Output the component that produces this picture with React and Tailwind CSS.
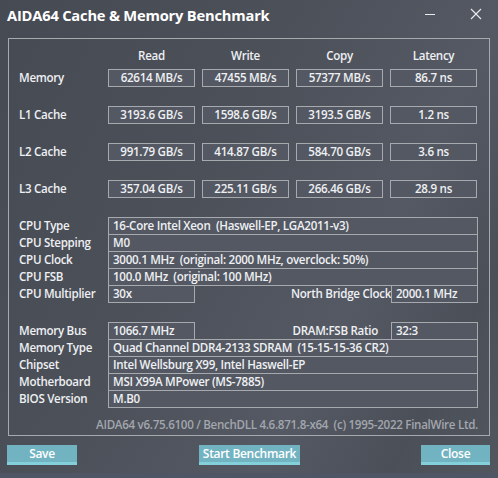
const speed = [
  { name: 'Memory', read: '62614 MB/s', write: '47455 MB/s', copy: '57377 MB/s', lat: '86.7 ns' },
  { name: 'L1 Cache', read: '3193.6 GB/s', write: '1598.6 GB/s', copy: '3193.5 GB/s', lat: '1.2 ns' },
  { name: 'L2 Cache', read: '991.79 GB/s', write: '414.87 GB/s', copy: '584.70 GB/s', lat: '3.6 ns' },
  { name: 'L3 Cache', read: '357.04 GB/s', write: '225.11 GB/s', copy: '266.46 GB/s', lat: '28.9 ns' },
]

const box = 'h-[18px] border border-[#a6a9ae] bg-[#545862] leading-[16px] whitespace-pre'

function Cell({ children }) {
  return <div className={`${box} text-center`}>{children}</div>
}

function InfoRow({ label, value, first }) {
  return (
    <div className={`flex ${first ? '' : 'mt-[-1px]'}`}>
      <div className="w-[89px] leading-[18px]">{label}</div>
      <div className={`${box} w-[370px] px-[4px]`}>{value}</div>
    </div>
  )
}

function SplitRow({ label, value, label2, value2, pad, first }) {
  return (
    <div className={`flex ${first ? '' : 'mt-[-1px]'}`}>
      <div className="w-[89px] leading-[18px]">{label}</div>
      <div className={`${box} w-[87px] px-[4px]`}>{value}</div>
      <div className={`flex-1 text-right leading-[18px] ${pad}`}>{label2}</div>
      <div className={`${box} w-[87px] px-[4px]`}>{value2}</div>
    </div>
  )
}

function Button({ w, children }) {
  return (
    <button className={`${w} h-[20px] bg-[#72b3c2] border-b-[3px] border-[#84d0da] text-white font-semibold text-[12px] leading-[17px]`}>
      {children}
    </button>
  )
}

export default function App() {
  return (
    <div className="w-[498px] h-[478px] overflow-hidden relative text-[11.6px] tracking-[-0.3px] font-semibold text-[#eef0f3] font-['Open_Sans','Noto_Sans',sans-serif] bg-[linear-gradient(118deg,#464a53_0%,#4c5059_40%,#555963_68%,#4b4f58_85%,#52565f_100%)]">
      <div className="h-[38px] flex items-start pt-[4px] pl-[7px] pr-[16px]">
        <div className="text-[14.7px] tracking-[-0.2px] font-bold leading-[22px] text-white">AIDA64 Cache &amp; Memory Benchmark</div>
        <div className="ml-auto flex items-center gap-[34px] mt-[4px]">
          <svg width="12" height="12" viewBox="0 0 12 12"><path d="M1 6.5h10" stroke="#e9ebee" strokeWidth="1" /></svg>
          <svg width="12" height="12" viewBox="0 0 12 12"><path d="M1 1l10 10M11 1L1 11" stroke="#e9ebee" strokeWidth="1.1" /></svg>
        </div>
      </div>

      <div className="ml-[8px] w-[482px] h-[398px] border border-[#a6a9ae] pl-[10px] pt-[8px]">
        <div className="grid grid-cols-[82px_87px_87px_87px_87px] gap-x-[7px]">
          <div />
          <div className="text-center leading-[18px]">Read</div>
          <div className="text-center leading-[18px]">Write</div>
          <div className="text-center leading-[18px]">Copy</div>
          <div className="text-center leading-[18px]">Latency</div>
        </div>
        {speed.map((r, i) => (
          <div key={r.name} className={`grid grid-cols-[82px_87px_87px_87px_87px] gap-x-[7px] ${i === 0 ? 'mt-[4px]' : 'mt-[19px]'}`}>
            <div className="leading-[18px]">{r.name}</div>
            <Cell>{r.read}</Cell>
            <Cell>{r.write}</Cell>
            <Cell>{r.copy}</Cell>
            <Cell>{r.lat}</Cell>
          </div>
        ))}

        <div className="mt-[19px] w-[459px]">
          <InfoRow first label="CPU Type" value="16-Core Intel Xeon  (Haswell-EP, LGA2011-v3)" />
          <InfoRow label="CPU Stepping" value="M0" />
          <InfoRow label="CPU Clock" value="3000.1 MHz  (original: 2000 MHz, overclock: 50%)" />
          <InfoRow label="CPU FSB" value="100.0 MHz  (original: 100 MHz)" />
          <SplitRow label="CPU Multiplier" value="30x" label2="North Bridge Clock" value2="2000.1 MHz" pad="pr-0" />
        </div>

        <div className="mt-[19px] w-[459px]">
          <SplitRow first label="Memory Bus" value="1066.7 MHz" label2="DRAM:FSB Ratio" value2="32:3" pad="pr-[13px]" />
          <InfoRow label="Memory Type" value="Quad Channel DDR4-2133 SDRAM  (15-15-15-36 CR2)" />
          <InfoRow label="Chipset" value="Intel Wellsburg X99, Intel Haswell-EP" />
          <InfoRow label="Motherboard" value="MSI X99A MPower (MS-7885)" />
          <InfoRow label="BIOS Version" value="M.B0" />
        </div>

        <div className="mt-[8px] w-[459px] text-right leading-[18px] text-[#a2a6ad] whitespace-pre">
          AIDA64 v6.75.6100 / BenchDLL 4.6.871.8-x64  (c) 1995-2022 FinalWire Ltd.
        </div>
      </div>

      <div className="mt-[9px] flex px-[7px]">
        <Button w="w-[70px]">Save</Button>
        <div className="ml-[122px]"><Button w="w-[101px]">Start Benchmark</Button></div>
        <div className="ml-auto mr-[1px]"><Button w="w-[69px]">Close</Button></div>
      </div>

      <div className="absolute left-0 right-0 bottom-0 h-[5px] bg-[#4e5564]" />
    </div>
  )
}
